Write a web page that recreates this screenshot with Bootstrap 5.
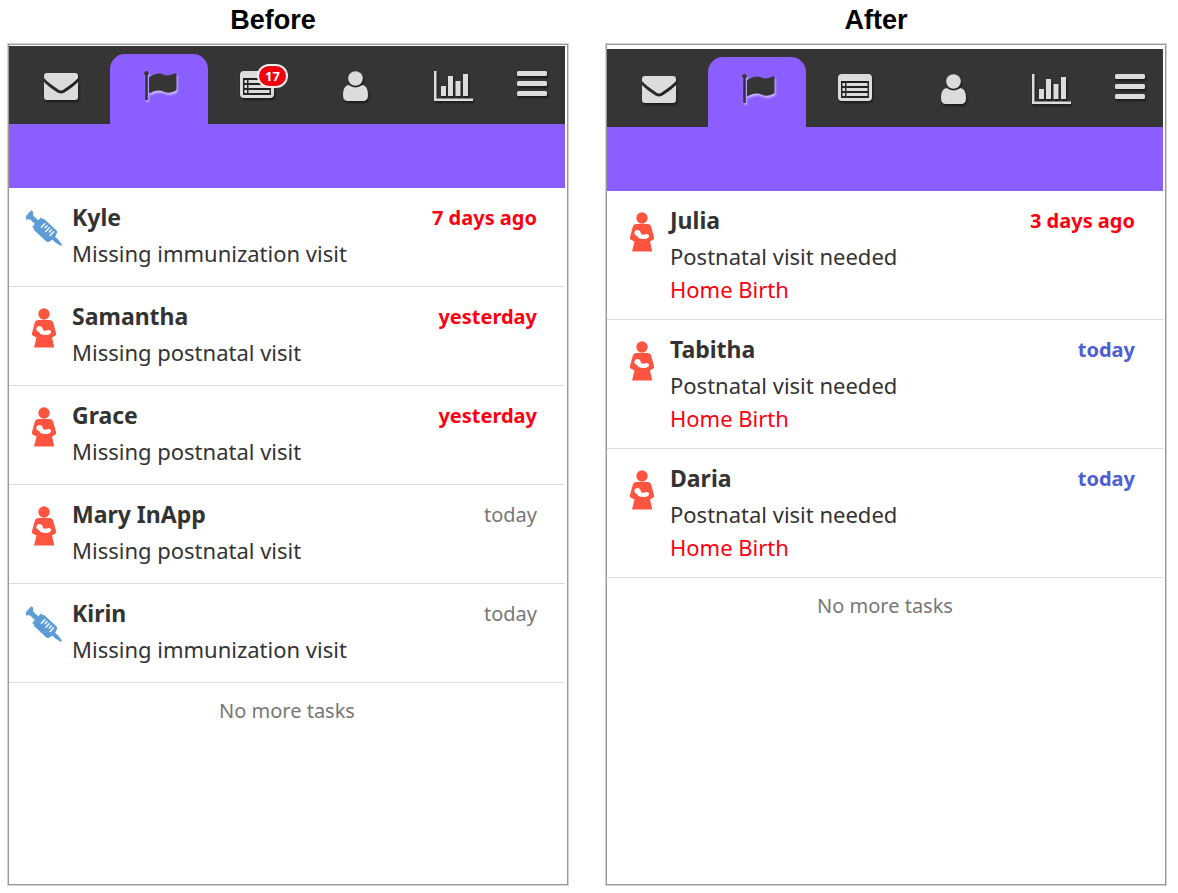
<!DOCTYPE html>
<html lang="en">
<head>
<meta charset="utf-8">
<meta name="viewport" content="width=device-width, initial-scale=1">
<title>Tasks: before and after</title>
<link href="https://cdn.jsdelivr.net/npm/bootstrap@5.3.0/dist/css/bootstrap.min.css" rel="stylesheet">
<style>
  body { font-family: "Noto Sans", sans-serif; color: #333; background: #fff; }
  .compare { padding: 0 12px 8px 8px; gap: 38px; }
  .phase { flex: 1 1 0; min-width: 0; }
  .phase-title { font: bold 27px/40px "Liberation Sans", sans-serif; color: #000; height: 44px; margin: 0; padding-right: 30px; }
  .after .phase-title { padding-right: 20px; }
  .phone { border: 1px solid #999; outline: 1px solid #d2d2d2; padding: 1px 2px 0 0; }
  .after .phone { padding-top: 4px; }
  .tabs-bar { background: #353535; height: 78px; padding: 8px 0 0 3px; }
  .tab-link { flex: 0 0 98px; color: #dcdcdc; height: 64px; }
  .tab-link svg { filter: drop-shadow(1px 2px 1px rgba(0,0,0,.5)); }
  .tab-link.active { background: #8a5eff; color: #353535; height: 70px; padding: 0 0 6px 3px; border-radius: 15px 15px 0 0; }
  .tab-link.active svg { filter: drop-shadow(1px 2px 1px rgba(225,215,255,.8)); }
  .menu-btn { color: #dcdcdc; height: 60px; }
  .menu-btn svg { filter: drop-shadow(1px 2px 1px rgba(0,0,0,.5)); }
  .count { left: 49px; top: 10px; width: 31px; height: 24px; line-height: 21px; font-size: 13px; font-weight: 700; color: #fff; background: #ee0011; border: 2px solid #eee; border-radius: 12px; text-align: center; }
  .filter-strip { background: #8a5eff; height: 64px; }
  .task { padding: 13px 28px 16px 15px; border-bottom: 1px solid #ddd; }
  .after .task { padding-bottom: 13px; }
  .task-icon { width: 40px; margin-right: 8px; padding-top: 8px; }
  .task-name, .task-text { line-height: 33px; margin: 0; }
  .task-name { font-size: 23px; font-weight: 700; margin-bottom: 3px; }
  .task-name a { color: #333; }
  .task-text { font-size: 22px; }
  .due { font-size: 20px; line-height: 34px; color: #777; }
  .late { color: #fb0010; }
  .now { color: #4c5fd5; }
  .list-end { font-size: 20px; line-height: 28px; color: #777; padding-top: 14px; margin: 0; }
</style>
</head>
<body>
<svg class="d-none" aria-hidden="true">
  <symbol id="mail" viewBox="0 0 34 27"><path fill="currentColor" d="M3 0h28q3 0 3 3v2Q31 9 19 17q-2 1.200-4 0Q3 9 0 5V3Q0 0 3 0zM0 9q4 4.500 13.500 10.500q3.500 2.200 7 0Q30 13.500 34 9v15q0 3-3 3H3q-3 0-3-3z"/></symbol>
  <symbol id="flag" viewBox="0 0 34 30"><path fill="currentColor" d="M2.500 0a2.300 2.300 0 0 1 1.300 4.200V29H1.200V4.200A2.300 2.300 0 0 1 2.500 0zM6 5.500Q14 .5 20 3.700q4 2 10-1q2.500-1.200 2.500.3v15q0 1.200-1 1.800q-6.500 3.500-12 .7Q14 18 6.500 21.800Q5 22.500 5 21V7q0-1 1-1.500z"/></symbol>
  <symbol id="list" viewBox="0 0 34 27"><path fill="currentColor" fill-rule="evenodd" d="M4 0h26q4 0 4 4v19q0 4-4 4H4q-4 0-4-4V4Q0 0 4 0zM3 7v17h28V7zM4.500 9H7v3H4.500zM8.500 9h21v3h-21zM4.500 14H7v3H4.500zM8.500 14h21v3h-21zM4.500 19H7v3H4.500zM8.500 19h21v3h-21z"/></symbol>
  <symbol id="person" viewBox="0 0 25 30"><circle cx="12.500" cy="7.500" r="7.300" fill="currentColor"/><path fill="currentColor" d="M5.500 14q7 4.800 14 0Q25 15 25 24q0 6-5 6H5q-5 0-5-6Q0 15 5.500 14z"/></symbol>
  <symbol id="chart" viewBox="0 0 39 30"><path fill="currentColor" d="M0 0h2.500v27.500H39V30H0zM7 15h5v10H7zM14 5h5v20h-5zM21.500 10h5v15h-5zM29 3h5v22h-5z"/></symbol>
  <symbol id="bars" viewBox="0 0 30 26"><path fill="currentColor" d="M1.500 0h27q1.500 0 1.500 1.500v2q0 1.500-1.500 1.500h-27Q0 5 0 3.500v-2Q0 0 1.500 0zM1.500 10h27q1.500 0 1.500 1.500v2q0 1.500-1.500 1.500h-27Q0 15 0 13.500v-2Q0 10 1.500 10zM1.500 20h27q1.500 0 1.500 1.500v2q0 1.500-1.500 1.500h-27Q0 25 0 23.500v-2Q0 20 1.500 20z"/></symbol>
  <symbol id="syringe" viewBox="0 0 36 36"><g transform="translate(4 5) rotate(43)" fill="#5e9cd6"><path d="M-3-5q2.500-1 3.800 1.200Q1.500-2.500 3-2.500H9V-6.500h5v13H9V2.500H3Q1.500 2.500.8 3.800Q-.5 6-3 5z"/><path d="M12-7.500h17q2 0 2.500 2L32.500-2h4.500l6 1.200v1.600L37 2h-4.500l-1 3.500q-.5 2-2.500 2H12z"/><path stroke="#fff" stroke-width="1.400" stroke-linecap="round" d="M16-4.500v5M19-4.500v3M22-4.500v5M25-4.500v3M28-4.500v5"/></g></symbol>
  <symbol id="mother" viewBox="0 0 24 40"><g fill="#ff5440"><circle cx="12" cy="6" r="5.700"/><path d="M6.500 12h11q3 0 3.800 3L24 25q.5 2-1 2.700L20 29.500l2.300 10H2l2.500-10L1 27.700q-1.500-.7-1-2.700l2.700-10q.8-3 3.800-3z"/></g><path fill="#fff" d="M4.300 21a3.300 3.300 0 0 1 6.500-.3l.2 1.500q3 1 5-.2q2.500-.5 3 1.500q.2 2.500-3 3.200q-4 .7-7.500-.7Q7.500 24 6.500 23.800Q4.300 23 4.300 21z"/></symbol>
</svg>

<main class="compare d-flex min-vh-100">
  <section class="phase before d-flex flex-column">
    <h1 class="phase-title text-center">Before</h1>
    <div class="phone flex-grow-1">
      <nav class="tabs-bar d-flex" aria-label="Before">
        <a class="tab-link d-flex justify-content-center align-items-center" href="#" aria-label="Messages"><svg width="34" height="27"><use href="#mail"/></svg></a>
        <a class="tab-link active d-flex justify-content-center align-items-center" href="#" aria-label="Tasks"><svg width="34" height="30"><use href="#flag"/></svg></a>
        <a class="tab-link position-relative d-flex justify-content-center align-items-center text-decoration-none" href="#" aria-label="Reports"><svg class="mb-1" width="34" height="27"><use href="#list"/></svg><span class="count position-absolute">17</span></a>
        <a class="tab-link d-flex justify-content-center align-items-center" href="#" aria-label="People"><svg width="25" height="30"><use href="#person"/></svg></a>
        <a class="tab-link d-flex justify-content-center align-items-center" href="#" aria-label="Analytics"><svg width="39" height="30"><use href="#chart"/></svg></a>
        <button type="button" class="menu-btn btn border-0 p-0 pe-1 flex-fill" aria-label="Menu"><svg width="30" height="26"><use href="#bars"/></svg></button>
      </nav>
      <div class="filter-strip"></div>
      <ul class="list-unstyled m-0">
        <li class="task d-flex align-items-start">
          <div class="task-icon d-flex justify-content-center"><svg width="36" height="40"><use href="#syringe"/></svg></div>
          <div class="flex-grow-1"><h2 class="task-name"><a class="text-decoration-none" href="#">Kyle</a></h2><p class="task-text">Missing immunization visit</p></div>
          <span class="due late fw-bold">7 days ago</span>
        </li>
        <li class="task d-flex align-items-start">
          <div class="task-icon d-flex justify-content-center"><svg width="24" height="40"><use href="#mother"/></svg></div>
          <div class="flex-grow-1"><h2 class="task-name"><a class="text-decoration-none" href="#">Samantha</a></h2><p class="task-text">Missing postnatal visit</p></div>
          <span class="due late fw-bold">yesterday</span>
        </li>
        <li class="task d-flex align-items-start">
          <div class="task-icon d-flex justify-content-center"><svg width="24" height="40"><use href="#mother"/></svg></div>
          <div class="flex-grow-1"><h2 class="task-name"><a class="text-decoration-none" href="#">Grace</a></h2><p class="task-text">Missing postnatal visit</p></div>
          <span class="due late fw-bold">yesterday</span>
        </li>
        <li class="task d-flex align-items-start">
          <div class="task-icon d-flex justify-content-center"><svg width="24" height="40"><use href="#mother"/></svg></div>
          <div class="flex-grow-1"><h2 class="task-name"><a class="text-decoration-none" href="#">Mary InApp</a></h2><p class="task-text">Missing postnatal visit</p></div>
          <span class="due">today</span>
        </li>
        <li class="task d-flex align-items-start">
          <div class="task-icon d-flex justify-content-center"><svg width="36" height="40"><use href="#syringe"/></svg></div>
          <div class="flex-grow-1"><h2 class="task-name"><a class="text-decoration-none" href="#">Kirin</a></h2><p class="task-text">Missing immunization visit</p></div>
          <span class="due">today</span>
        </li>
      </ul>
      <p class="list-end text-center">No more tasks</p>
    </div>
  </section>

  <section class="phase after d-flex flex-column">
    <h1 class="phase-title text-center">After</h1>
    <div class="phone flex-grow-1">
      <nav class="tabs-bar d-flex" aria-label="After">
        <a class="tab-link d-flex justify-content-center align-items-center" href="#" aria-label="Messages"><svg width="34" height="27"><use href="#mail"/></svg></a>
        <a class="tab-link active d-flex justify-content-center align-items-center" href="#" aria-label="Tasks"><svg width="34" height="30"><use href="#flag"/></svg></a>
        <a class="tab-link d-flex justify-content-center align-items-center" href="#" aria-label="Reports"><svg class="mb-1" width="34" height="27"><use href="#list"/></svg></a>
        <a class="tab-link d-flex justify-content-center align-items-center" href="#" aria-label="People"><svg width="25" height="30"><use href="#person"/></svg></a>
        <a class="tab-link d-flex justify-content-center align-items-center" href="#" aria-label="Analytics"><svg width="39" height="30"><use href="#chart"/></svg></a>
        <button type="button" class="menu-btn btn border-0 p-0 pe-1 flex-fill" aria-label="Menu"><svg width="30" height="26"><use href="#bars"/></svg></button>
      </nav>
      <div class="filter-strip"></div>
      <ul class="list-unstyled m-0">
        <li class="task d-flex align-items-start">
          <div class="task-icon d-flex justify-content-center"><svg width="24" height="40"><use href="#mother"/></svg></div>
          <div class="flex-grow-1"><h2 class="task-name"><a class="text-decoration-none" href="#">Julia</a></h2><p class="task-text">Postnatal visit needed</p><p class="task-text late">Home Birth</p></div>
          <span class="due late fw-bold">3 days ago</span>
        </li>
        <li class="task d-flex align-items-start">
          <div class="task-icon d-flex justify-content-center"><svg width="24" height="40"><use href="#mother"/></svg></div>
          <div class="flex-grow-1"><h2 class="task-name"><a class="text-decoration-none" href="#">Tabitha</a></h2><p class="task-text">Postnatal visit needed</p><p class="task-text late">Home Birth</p></div>
          <span class="due now fw-bold">today</span>
        </li>
        <li class="task d-flex align-items-start">
          <div class="task-icon d-flex justify-content-center"><svg width="24" height="40"><use href="#mother"/></svg></div>
          <div class="flex-grow-1"><h2 class="task-name"><a class="text-decoration-none" href="#">Daria</a></h2><p class="task-text">Postnatal visit needed</p><p class="task-text late">Home Birth</p></div>
          <span class="due now fw-bold">today</span>
        </li>
      </ul>
      <p class="list-end text-center">No more tasks</p>
    </div>
  </section>
</main>
<script src="https://cdn.jsdelivr.net/npm/bootstrap@5.3.0/dist/js/bootstrap.bundle.min.js"></script>
</body>
</html>
